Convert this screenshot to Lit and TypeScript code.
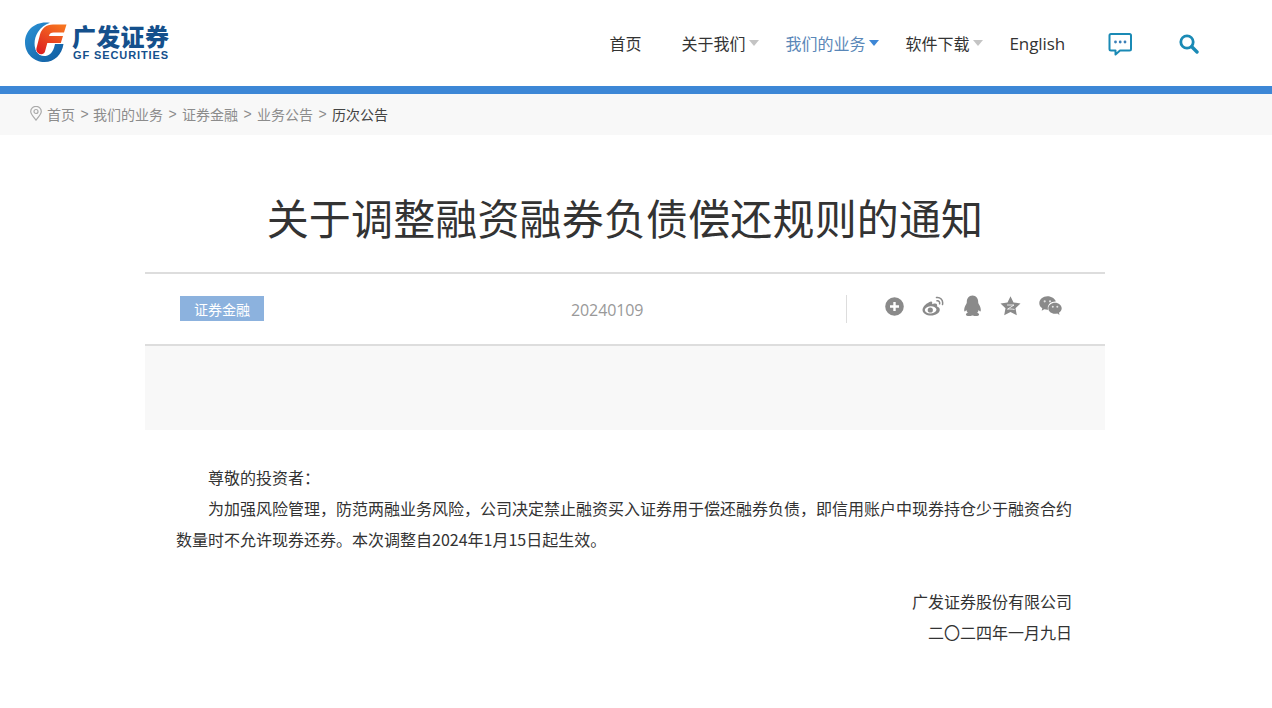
import { LitElement, html, css } from "lit";
import { customElement } from "lit/decorators.js";

@customElement("app-root")
export class AppRoot extends LitElement {
  static styles = css`
    :host { display: block; min-height: 708px; background: #fff; color: #333; font-family: "Noto Sans CJK SC", "Noto Sans", sans-serif; overflow: hidden; }
    .header { height: 86px; display: flex; align-items: center; justify-content: space-between; padding: 0 73px 0 25px; box-sizing: border-box; }
    .logo { display: flex; align-items: center; gap: 6px; margin-top: -2px; }
    .logo svg { display: block; }
    .logo-text { display: flex; flex-direction: column; width: 97px; }
    .logo-cn { font-size: 24px; line-height: 26px; font-weight: 900; color: #14508c; letter-spacing: 0.3px; white-space: nowrap; margin-left: -1px; }
    .logo-en { font-family: "Liberation Sans", sans-serif; font-size: 11px; line-height: 11px; font-weight: 700; color: #14508c; letter-spacing: 0.9px; white-space: nowrap; margin-top: 1px; }
    .nav { display: flex; align-items: center; font-size: 16px; margin-top: 1px; }
    .nav-item { display: flex; align-items: center; margin: -2px 26px 0 0; width: max-content; color: #333; }
    .caret { width: 14px; display: flex; justify-content: flex-end; }
    .caret i { width: 0; height: 0; border-left: 5px solid transparent; border-right: 5px solid transparent; border-top: 6px solid #c4c4c4; }
    .active { color: #5a87b8; }
    .active .caret i { border-top-color: #3d87d6; }
    .english { font-family: "Open Sans", sans-serif; font-size: 17px; letter-spacing: -0.1px; color: #333; margin-right: 43px; }
    .chat { margin-right: 47px; display: block; }
    .search { display: block; }
    .bar { height: 8px; background: #3d87d6; }
    .crumbs { height: 41px; background: #f8f8f8; display: flex; align-items: center; padding: 0 0 2px 30px; box-sizing: border-box; font-size: 14px; color: #8c8c8c; }
    .crumbs svg { margin-right: 5px; }
    .crumbs .sep { font-family: "Liberation Sans", sans-serif; margin: 0 5px; width: 9px; text-align: center; }
    .crumbs .sep.first { margin-right: 4px; }
    .crumbs .cur { color: #444; }
    .main { width: 960px; margin: 0 auto 0 145px; }
    h1 { margin: 0; height: 137px; display: flex; align-items: center; justify-content: center; font-size: 42px; font-weight: 400; letter-spacing: 0.15px; color: #333; line-height: 1; padding: 27px 0 0; box-sizing: border-box; }
    .meta { border-top: 2px solid #ddd; border-bottom: 2px solid #ddd; display: flex; align-items: center; height: 70px; }
    .meta-left { width: 701px; display: flex; align-items: center; padding-left: 35px; box-sizing: border-box; }
    .tag { width: 84px; height: 25px; background: #8cb2de; color: #fff; font-size: 14px; display: flex; align-items: center; justify-content: center; margin-top: -1px; }
    .date { margin-left: 307px; font-family: "Open Sans", sans-serif; font-size: 16px; letter-spacing: -0.1px; color: #999; margin-top: 2px; }
    .shares { flex: 1; height: 28px; border-left: 1px solid #ddd; display: flex; align-items: center; padding-left: 38px; margin-top: -1px; }
    .shares svg { display: block; margin-top: -5px; flex: none; }
    .s-weibo { margin-left: 18px; }
    .s-qq { margin-left: 19px; }
    .s-star { margin-left: 18px; }
    .s-wx { margin-left: 18px; }
    .gray { height: 84px; background: #f8f8f8; }
    .body { padding: 32px 33px 0 31px; font-size: 16px; line-height: 31px; color: #333; }
    .body p { margin: 0; text-indent: 2em; }
    .body .sign { text-align: right; text-indent: 0; }
    .blank { height: 31px; }
  `;

  render() {
    return html`
      <div class="header">
        <div class="logo">
          <svg width="42" height="41" viewBox="0 0 42 41">
            <defs>
              <linearGradient id="fg" x1="0.8" y1="0" x2="0.2" y2="1">
                <stop offset="0" stop-color="#f7741f" />
                <stop offset="1" stop-color="#dd1f20" />
              </linearGradient>
              <linearGradient id="bg" x1="0" y1="0" x2="1" y2="1">
                <stop offset="0" stop-color="#2b93d6" />
                <stop offset="1" stop-color="#0f5a9e" />
              </linearGradient>
            </defs>
            <path fill="url(#bg)" d="M25 .8C10.500 -1.500 0 8 0 20.500 0 31.800 9 40 19.500 40 29.500 40 37 32.500 38.500 22L30 22C29 27 27 32 22.500 33.500 18 35 14 33.500 11.500 29.500 8.500 24 9 16 13 10 16 5.500 20 2.500 25 .8Z" />
            <path fill="url(#fg)" stroke="#fff" stroke-width="1" paint-order="stroke" d="M41.500 2.500L39 10.500 28.500 10.500C26 10.500 24.800 11.500 24.300 13L24 14 38 14 35.800 21 22.300 21 20 29.500C19 32.500 15.500 33 13 31 11.500 29.800 11 28 11.500 26L15 12.500C16.800 6.500 21 2.500 28 2.500Z" />
          </svg>
          <div class="logo-text">
            <span class="logo-cn">广发证券</span>
            <span class="logo-en">GF SECURITIES</span>
          </div>
        </div>
        <div class="nav">
          <span class="nav-item"><span>首页</span><span class="caret"></span></span>
          <span class="nav-item"><span>关于我们</span><span class="caret"><i></i></span></span>
          <span class="nav-item active"><span>我们的业务</span><span class="caret"><i></i></span></span>
          <span class="nav-item"><span>软件下载</span><span class="caret"><i></i></span></span>
          <span class="english">English</span>
          <svg class="chat" width="24" height="24" viewBox="0 0 24 24">
            <path fill="none" stroke="#1a8ab5" stroke-width="2" stroke-linejoin="round" d="M3 2H21.500A1.500 1.500 0 0 1 23 3.500V17A1.500 1.500 0 0 1 21.500 18.500H12L7.500 22.500V18.500H3A1.500 1.500 0 0 1 1.500 17V3.500A1.500 1.500 0 0 1 3 2Z" />
            <circle cx="7.500" cy="10" r="1.400" fill="#3a7fb8" />
            <circle cx="12.200" cy="10" r="1.400" fill="#3a7fb8" />
            <circle cx="17" cy="10" r="1.400" fill="#3a7fb8" />
          </svg>
          <svg class="search" width="20" height="20" viewBox="0 0 20 20">
            <circle cx="8" cy="8" r="6.200" fill="none" stroke="#1a8ab5" stroke-width="2.800" />
            <path d="M12.800 12.800L18 18" stroke="#1a8ab5" stroke-width="3.400" stroke-linecap="round" />
          </svg>
        </div>
      </div>
      <div class="bar"></div>
      <div class="crumbs">
        <svg width="12" height="15" viewBox="0 0 12 15">
          <path fill="none" stroke="#aaa" stroke-width="1.200" d="M6 14C3 10.500 .7 8 .7 5.500A5.300 5.100 0 0 1 11.300 5.500C11.300 8 9 10.500 6 14Z" />
          <circle cx="6" cy="5.500" r="2" fill="none" stroke="#aaa" stroke-width="1.200" />
        </svg>
        <span>首页</span><span class="sep first">&gt;</span>
        <span>我们的业务</span><span class="sep">&gt;</span>
        <span>证券金融</span><span class="sep">&gt;</span>
        <span>业务公告</span><span class="sep">&gt;</span>
        <span class="cur">历次公告</span>
      </div>
      <div class="main">
        <h1>关于调整融资融券负债偿还规则的通知</h1>
        <div class="meta">
          <div class="meta-left">
            <span class="tag">证券金融</span>
            <span class="date">20240109</span>
          </div>
          <div class="shares">
            <svg width="19" height="19" viewBox="0 0 19 19"><path fill="#8a8a8a" fill-rule="evenodd" d="M9.500 .2a9.300 9.300 0 1 0 0 18.600 9.300 9.300 0 0 0 0-18.600ZM8.300 5h2.400v3.300H14v2.400h-3.300V14H8.300v-3.300H5V8.300h3.300Z" /></svg>
            <svg class="s-weibo" width="22" height="20" viewBox="0 0 22 20">
              <path fill="#8a8a8a" fill-rule="evenodd" d="M9 5.500C4.800 6.800.5 10.500.5 14c0 3.500 4.300 5.500 8.300 5.500 5 0 9-2.800 9-5.800 0-2-1.800-2.800-2.900-3.100.6-1.500.4-3-1.900-3.100-1 0-2.300.3-2.900.7C10.500 6.500 10.200 5.300 9 5.500ZM8.200 10.200c3.300-.3 6 1.100 6.200 3.100.2 2.100-2.300 3.900-5.400 4.200-3.200.3-5.900-1.100-6.100-3.200-.2-2 2.200-3.800 5.300-4.100Z" />
              <circle cx="8.300" cy="14" r="2.600" fill="#8a8a8a" />
              <path fill="none" stroke="#8a8a8a" stroke-width="1.500" stroke-linecap="round" d="M14.500 1.500c3.500-.6 7 2.500 6 7M15 4.800c1.800-.3 3 1 2.600 3" />
            </svg>
            <svg class="s-qq" width="19" height="22" viewBox="0 0 19 22">
              <path fill="#8a8a8a" d="M9.500 .5c3.800 0 5.700 3 5.700 6.500 0 1 .2 1.500 .8 2.500 1 1.500 2 4 1.800 6-.2 1.500-1.200 1-2.100-.5-.2 1.200-.8 2-1.500 2.800 1 .3 1.900 .8 1.900 1.700 0 1.200-2.400 1.800-4.100 1.500-1.200-.2-1.800-.6-2.500-.6s-1.300.4-2.500.6c-1.700.3-4.100-.3-4.100-1.500 0-.9 .9-1.400 1.900-1.700-.7-.8-1.300-1.600-1.500-2.800-.9 1.500-1.900 2-2.100 .5-.2-2 .8-4.500 1.800-6 .6-1 .8-1.500 .8-2.500C3.800 3.500 5.700 .5 9.500 .5Z" />
            </svg>
            <svg class="s-star" width="21" height="20" viewBox="0 0 21 20">
              <path fill="#8a8a8a" d="M10.500 .3l3 6.200 7 .9-5 4.900 1.300 7-6.300-3.400-6.300 3.400 1.300-7-5-4.900 7-.9Z" />
              <path fill="none" stroke="#fff" stroke-width="1" opacity=".8" d="M7 9H14L7.500 13.200C10 12.800 12 13 14.500 13.500" />
            </svg>
            <svg class="s-wx" width="23" height="20" viewBox="0 0 23 20">
              <path fill="#8a8a8a" d="M8.500 .3C4 .3 .3 3.400 .3 7.200c0 2.100 1.200 3.900 3 5.100l-.6 2.400 2.600-1.500c1 .3 2 .5 3.200 .5h.6c-.2-.6-.3-1.200-.3-1.900 0-3.600 3.300-6.400 7.400-6.400h.6C15.900 2.700 12.500 .3 8.500 .3Z" />
              <path fill="#8a8a8a" d="M16 6.800c-3.700 0-6.700 2.500-6.700 5.500s3 5.500 6.700 5.500c.8 0 1.600-.1 2.300-.4l2.200 1.600-.5-2.300c1.700-1 2.700-2.700 2.700-4.400C22.700 9.300 19.700 6.800 16 6.800Z" />
              <g fill="#fff" opacity=".75"><circle cx="5.700" cy="5.300" r="1.100" /><circle cx="11" cy="5.300" r="1.100" /><circle cx="13.800" cy="10.800" r="1" /><circle cx="18.300" cy="10.800" r="1" /></g>
            </svg>
          </div>
        </div>
        <div class="gray"></div>
        <div class="body">
          <p>尊敬的投资者：</p>
          <p>为加强风险管理，防范两融业务风险，公司决定禁止融资买入证券用于偿还融券负债，即信用账户中现券持仓少于融资合约数量时不允许现券还券。本次调整自2024年1月15日起生效。</p>
          <div class="blank"></div>
          <p class="sign">广发证券股份有限公司</p>
          <p class="sign">二〇二四年一月九日</p>
        </div>
      </div>
    `;
  }
}
